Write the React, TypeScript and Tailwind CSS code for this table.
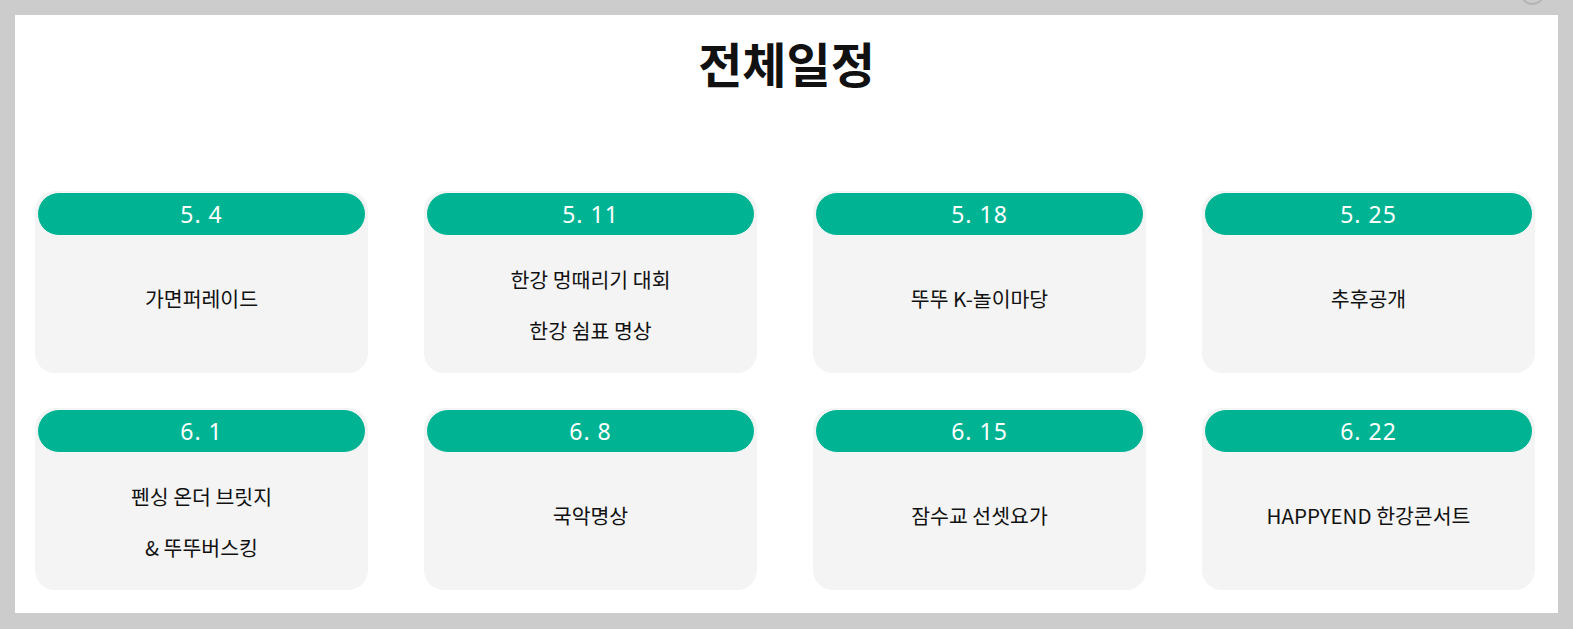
const schedule = [
  { date: "5. 4", lines: ["가면퍼레이드"] },
  { date: "5. 11", lines: ["한강 멍때리기 대회", "한강 쉼표 명상"] },
  { date: "5. 18", lines: ["뚜뚜 K-놀이마당"] },
  { date: "5. 25", lines: ["추후공개"] },
  { date: "6. 1", lines: ["펜싱 온더 브릿지", "& 뚜뚜버스킹"] },
  { date: "6. 8", lines: ["국악명상"] },
  { date: "6. 15", lines: ["잠수교 선셋요가"] },
  { date: "6. 22", lines: ["HAPPYEND 한강콘서트"] },
];

function ScheduleCard({ date, lines }: { date: string; lines: string[] }) {
  return (
    <div className="h-[182px] rounded-[20px] bg-[#f4f4f4] px-[2px] pt-[1px] flex flex-col">
      <div
        className="h-[44px] rounded-full bg-[#00b493] border border-[#f7f7f7] flex items-center justify-center text-[23px] text-white tracking-[1px]"
        style={{ fontFamily: '"Noto Sans", sans-serif' }}
      >
        {date}
      </div>
      <div className="flex-1 flex flex-col items-center justify-center gap-[15px]">
        {lines.map((line) => (
          <p
            key={line}
            className={`text-[20.5px] leading-[36px] text-[#111] ${lines.length === 1 ? "mb-[14px]" : ""}`}
          >
            {line}
          </p>
        ))}
      </div>
    </div>
  );
}

export default function App() {
  return (
    <div
      className="relative h-screen bg-[#cccccc] p-[15px] pb-[16px] overflow-hidden"
      style={{ fontFamily: '"Noto Sans CJK KR", "Noto Sans", sans-serif' }}
    >
      {/* 닫기 버튼 (위로 잘림) */}
      <div className="absolute right-[28px] top-[-20px] w-[25px] h-[25px] rounded-full border-2 border-[#b5b5b5]" />

      <div className="h-full bg-white pt-[20px]">
        <h1 className="text-center text-[48px] leading-[55px] font-bold text-[#111]">전체일정</h1>

        <div className="ml-[20px] mt-[101px] w-[1500px] grid grid-cols-4 gap-x-[56px] gap-y-[35px]">
          {schedule.map((item) => (
            <ScheduleCard key={item.date} date={item.date} lines={item.lines} />
          ))}
        </div>
      </div>
    </div>
  );
}
